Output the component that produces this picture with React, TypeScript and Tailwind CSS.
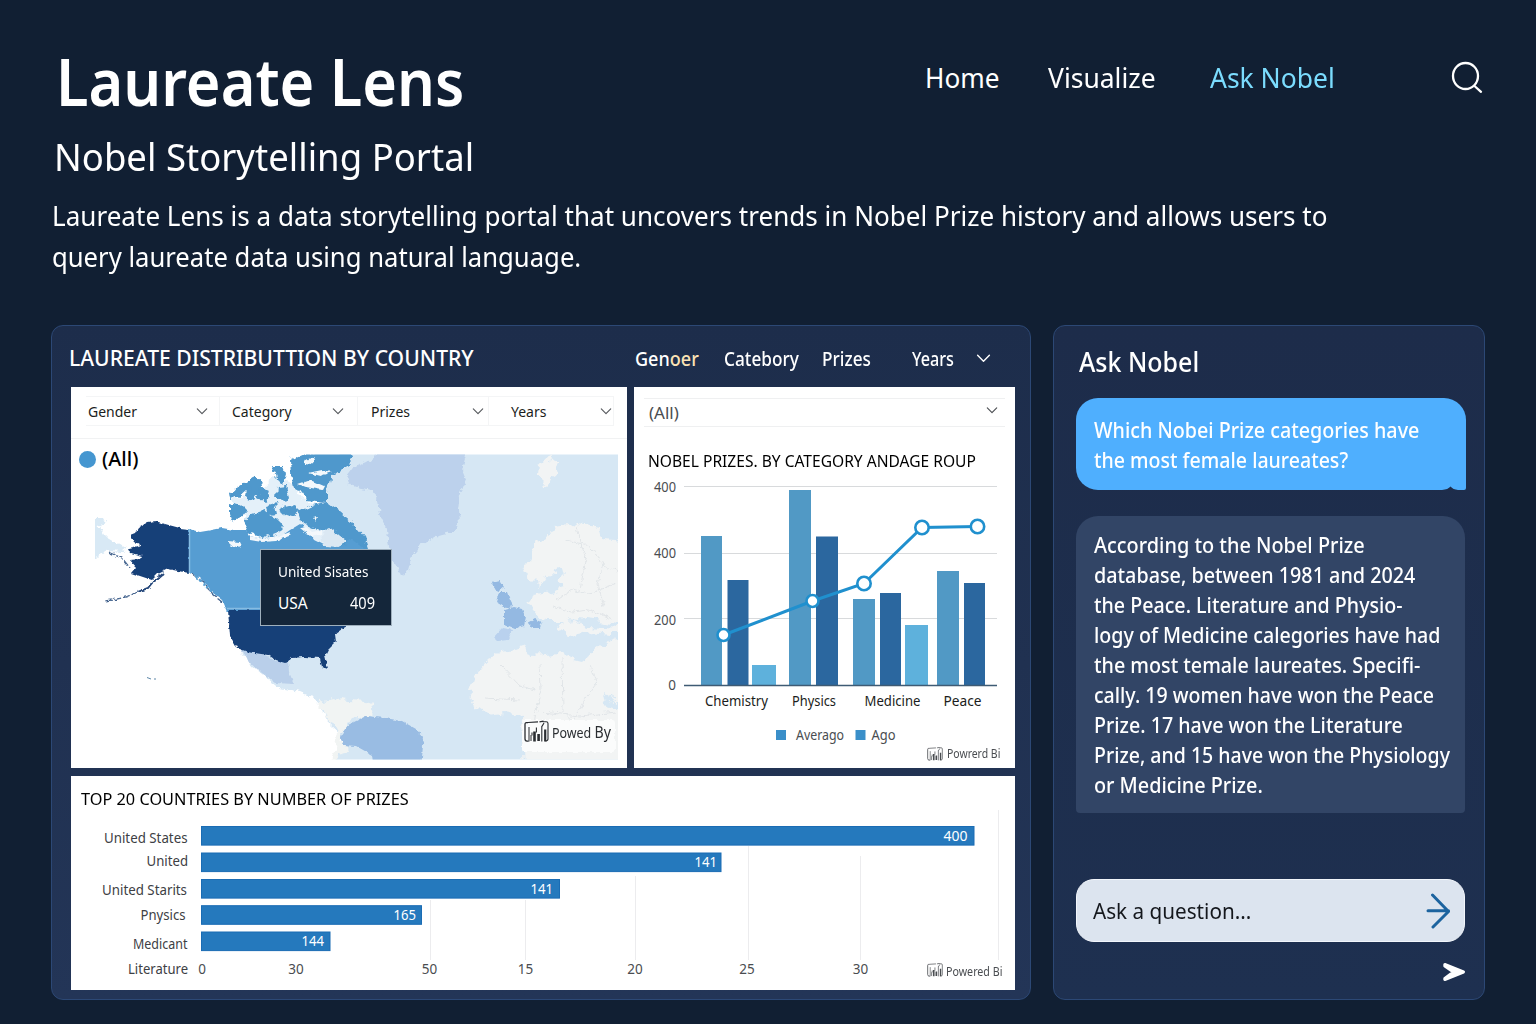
import type { ReactNode } from "react";

/** Text line whose width is tuned with a horizontal scale class. */
function Line({ className = "", children }: { className?: string; children: ReactNode }) {
  return <span className={`block w-max origin-left whitespace-nowrap ${className}`}>{children}</span>;
}

function Chevron({ className = "" }: { className?: string }) {
  return (
    <svg viewBox="0 0 14 8" className={className} fill="none" stroke="currentColor" strokeWidth="1.300" strokeLinecap="round" strokeLinejoin="round">
      <path d="M1.5 1 7 6.6 12.5 1" />
    </svg>
  );
}

function PowerMark({ className = "" }: { className?: string }) {
  return (
    <svg viewBox="0 0 25 22" className={className} fill="none" stroke="currentColor">
      <path d="M4 2.200H2.4Q1 2.200 1 3.8v14.4Q1 20.4 3 20.6h1.6" strokeWidth="1.3" />
      <path d="M4 2 14 1.4M15.5 1.4l4-.8M18.6 1.2h3.6Q24 1.2 24 3v15.6q0 1.8-2.4 2" strokeWidth="1.1" />
      <path d="M5 6.5V21M7 14.500v6" strokeWidth="1" />
      <path d="M10.500 11v10M14.600 13.5v7" strokeWidth="2.600" />
      <path d="M17.8 5.5V21M20 2.5l-2.200 3.6M12.4 7v5M8 12v3" strokeWidth="1.1" />
      <path d="M21.200 9v12" strokeWidth="2.200" />
    </svg>
  );
}

const filters = [
  { label: "Gender", box: "w-[134px] pl-[2px]", chev: "right-[11px]" },
  { label: "Category", box: "w-[138px] pl-[12px]", chev: "right-[13px]" },
  { label: "Prizes", box: "w-[131px] pl-[13px]", chev: "right-[4px]" },
  { label: "Years", box: "w-[125px] pl-[22px]", chev: "right-[1px]" },
];

function WorldMap() {
  return (
    <svg viewBox="71 440 556 328" className="absolute inset-x-0 bottom-0 h-[328px] w-[556px]">
      <defs>
        <filter id="coast" x="-5%" y="-5%" width="110%" height="110%">
          <feTurbulence type="fractalNoise" baseFrequency="0.16" numOctaves="3" seed="4" result="n" />
          <feDisplacementMap in="SourceGraphic" in2="n" scale="7" xChannelSelector="R" yChannelSelector="G" />
          <feGaussianBlur stdDeviation="0.4" />
        </filter>
        <filter id="rough" x="-5%" y="-5%" width="110%" height="110%">
          <feTurbulence type="fractalNoise" baseFrequency="0.22" numOctaves="2" seed="9" result="n" />
          <feDisplacementMap in="SourceGraphic" in2="n" scale="4" xChannelSelector="R" yChannelSelector="G" />
          <feGaussianBlur stdDeviation="0.3" />
        </filter>
        <filter id="isles" x="-5%" y="-5%" width="110%" height="110%">
          <feTurbulence type="fractalNoise" baseFrequency="0.13" numOctaves="3" seed="21" result="n" />
          <feDisplacementMap in="SourceGraphic" in2="n" scale="9" xChannelSelector="R" yChannelSelector="G" />
          <feGaussianBlur stdDeviation="0.4" />
        </filter>
        <filter id="soft" x="-10%" y="-10%" width="120%" height="120%">
          <feTurbulence type="fractalNoise" baseFrequency="0.09" numOctaves="4" seed="12" result="n" />
          <feDisplacementMap in="SourceGraphic" in2="n" scale="14" xChannelSelector="R" yChannelSelector="G" />
          <feGaussianBlur stdDeviation="0.5" />
        </filter>
        <clipPath id="frame">
          <rect x="95" y="454.5" width="523" height="305" />
        </clipPath>
      </defs>
      <g clipPath="url(#frame)">
        <path filter="url(#coast)" fill="#d6e7f4" d="M346 440H640V780H330L336 756 345 745 342 735 330 724 322 708 312 697 300 692 280 688 262 674 250 664 243 655 240 630H340V552L322 505 326 480 336 466Z" />
        <path filter="url(#coast)" fill="#d8e9f5" d="M85 518H104L106 522 99 526 104 535 114 541 126 548 122 551 108 550 98 556 92 562H85Z" />
        <path filter="url(#soft)" fill="#f1f4f3" d="M318 702 340 698 362 700 376 708 368 718 350 720 342 732 346 748 338 760 330 760 340 740 328 716Z" />

        {/* Greenland */}
        <path filter="url(#coast)" fill="#bcd1ec" d="M346 476 352 468 366 462 375 455 370 440H470L462 470 466 480 460 495 458 510 459 525 450 533 435 537 421 545 412 556 408 570 402 578 398 568 392 560 389 548 387 530 380 515 378 500 373 490 360 488 348 484Z" />
        {/* Mexico */}
        <path filter="url(#rough)" fill="#b9cfea" d="M242 650 262 654 276 661 288 660 289 672 294 684 276 683 262 673 250 663Z" />
        {/* South America */}
        <path filter="url(#rough)" fill="#99bce3" d="M340 736 348 725 366 716 385 718 402 721 416 729 424 738 423 745 421 770H374L372 755 356 746 344 745Z" />

        {/* Europe and Africa */}
        <g filter="url(#soft)" fill="#f2f4f4">
          <path d="M540 464 552 458 562 462 556 472 550 484 544 488 539 476Z" />
          <path d="M556 526 574 523 598 528 602 540 620 542 640 540V634H610L592 632 570 636 556 626 562 622 548 622 538 616 530 606 524 602 536 594 552 592 566 588 558 578 548 574 540 588 530 578 522 572 530 558 536 546 548 538Z" />
          <path d="M488 660 502 650 524 646 530 656 560 654 584 660 600 646 622 638 640 640V780H524L522 716 504 712 486 714 474 704 468 692 474 676Z" />
        </g>
        <g filter="url(#soft)" fill="#d6e7f4">
          <path d="M544 578 558 568 566 574 556 584ZM566 618 588 620 620 624V628L590 626ZM604 694 616 702 618 708 606 704Z" />
        </g>
        <g filter="url(#coast)" fill="none" stroke="#e1e5e8" strokeWidth="1">
          <path d="M540 664 541 690 536 710 532 740M562 658 563 712 578 728M590 664 596 684 584 700 572 724M500 665 520 686 536 690M484 698 520 700M552 606 572 612 590 610 612 620M566 540 590 546 604 566 618 572M556 600 572 590 588 594 616 584M576 528 586 560 580 590M604 560 598 584 604 606M542 712 580 716 616 712" />
        </g>

        {/* British Isles and neighbours */}
        <g filter="url(#rough)" fill="#94b9e2">
          <path d="M492 583 500 581 504 587 499 591 494 589Z" />
          <path d="M499 592 507 592 510 600 513 606 506 608 496 602Z" />
          <path d="M504 610 514 607 522 609 526 618 524 626 514 629 504 625Z" />
          <path d="M528 623 535 619 542 622 540 628 532 628Z" />
          <path fill="#b9d1ee" d="M502 628 512 630 508 640 498 641 493 638Z" />
        </g>

        {/* Arctic channels */}
        <path filter="url(#isles)" fill="#e4f0f9" d="M232 500 256 494 276 476 292 484 302 500 322 508 330 520 346 538 340 548 300 540 262 541 248 530 246 516Z" />
        {/* Canadian arctic islands */}
        <g fill="#4f98cc" filter="url(#isles)">
          <path d="M290 460 304 454 350 450 352 458 340 470 330 478 327 490 327 503 306 501 304 494 294 488 291 474Z" />
          <path d="M273 466 281 466 286 474 283 484 277 478Z" />
          <path d="M229 494 242 485 256 475 262 482 264 490 256 496 246 491 238 498 230 500Z" />
          <path d="M230 502 242 505 247 510 242 517 232 521 230 514Z" />
          <path d="M247 488 257 492 255 501 246 497ZM261 486 269 490 266 503 258 498ZM278 487 286 486 289 496 284 502 277 496Z" />
          <path d="M265 507 275 504 277 513 267 514ZM281 508 293 505 299 511 292 517 283 514Z" />
          <path d="M243 522 252 514 264 510 275 517 282 524 279 533 264 539 249 533Z" />
          <path d="M298 512 314 505 328 503 340 512 352 522 364 536 370 554 350 556 342 542 330 532 314 528 301 522Z" />
        </g>
        {/* Canada */}
        <path filter="url(#rough)" fill="#569dd2" d="M189 529 200 532 212 530 222 528 234 530 246 530 250 536 262 539 280 537 290 530 300 524 308 530 314 540 326 546 345 545 350 538 364 549V612H227L222 600 213 593 207 585 200 577 189 573Z" />
        <g filter="url(#rough)" fill="#f3f8fc">
          <path d="M250 536 264 539 280 536 290 532 289 536 276 541 262 542 250 540ZM227 541 240 542 242 546 234 548ZM313 518 318 517 316 522ZM304 460 316 457 312 465 305 464ZM298 484 310 480 324 486 322 490 306 487Z" />
          <path d="M332 472 320 476 308 473 322 470ZM300 528 306 527 312 532 322 530 322 534 310 536Z" />
        </g>
        <path d="M320 534 332 528 346 540 340 548 324 547Z" fill="#dbe8f3" filter="url(#isles)" />

        {/* Alaska and the contiguous states */}
        <g filter="url(#rough)">
          <path fill="#173f78" d="M189 529 180 528 165 524 155 521 148 522 138 528 135 533 130 535 134 541 142 546 129 549 131 553 142 556 140 559 130 560 136 567 131 573 140 576 152 580 158 574 168 569 178 571 189 573Z" />
          <path fill="none" stroke="#28497c" strokeWidth="2" d="M164 573 152 583 148 588 138 592" />
          <path fill="none" stroke="#46658f" strokeWidth="1.3" strokeDasharray="7 2" d="M138 592 126 597 112 600 104 601M108 552 122 558 130 568M192 574 204 582 212 594 222 602" />
          <path fill="none" stroke="#58a0d3" strokeWidth="3" strokeDasharray="3 2" d="M196 576 206 586 214 594" />
        </g>
        <path filter="url(#rough)" fill="#173f78" d="M228 610H353L354 622 342 629 335 634 336 642 328 650 325 656 328 669 322 667 320 658 304 657 292 658 286 663 276 660 268 655 248 652 237 648 230 636Z" />
        <path d="M189.500 529V573M227 608.500H262" stroke="#86bce2" strokeWidth="1.500" fill="none" />
        <path d="M147 677.500 151 679M154 679H156" stroke="#5d87a8" fill="none" />
      </g>
      {/* Badge backdrop */}
      <rect x="522" y="720" width="93" height="32" rx="3" fill="#fbfcfc" filter="url(#rough)" />
    </svg>
  );
}

const columns = [
  { x: 701, y: 536, w: 21, c: "#5199c5" },
  { x: 727.5, y: 580, w: 21, c: "#2b679f" },
  { x: 752, y: 665, w: 24, c: "#5eb1dc" },
  { x: 789, y: 490, w: 22, c: "#5199c5" },
  { x: 816, y: 536.5, w: 22, c: "#2b679f" },
  { x: 853, y: 599, w: 22, c: "#5199c5" },
  { x: 880, y: 593, w: 21, c: "#2b679f" },
  { x: 905, y: 625, w: 23, c: "#5eb1dc" },
  { x: 937, y: 571, w: 22, c: "#5199c5" },
  { x: 964, y: 583, w: 21, c: "#2b679f" },
];
const points: [number, number, number][] = [
  [723.5, 635, 6],
  [812.5, 601, 6],
  [864, 583.5, 6.7],
  [922, 527.5, 6.7],
  [977.5, 526.5, 6.7],
];

function CategoryChart() {
  return (
    <svg viewBox="634 475 381 271" className="block h-[271px] w-[381px]" fontSize="14">
      <path d="M684 486.500H997M684 553.500H997M684 618.500H997" stroke="#d8dadc" fill="none" />
      {columns.map((b) => (
        <rect key={b.x} x={b.x} y={b.y} width={b.w} height={685.5 - b.y} fill={b.c} />
      ))}
      <path d="M684 685.500H997" stroke="#3f5b74" strokeWidth="1.500" fill="none" />
      <polyline points={points.map(([x, y]) => `${x},${y}`).join(" ")} fill="none" stroke="#2090ce" strokeWidth="3" />
      {points.map(([x, y, r]) => (
        <circle key={x} cx={x} cy={y} r={r} fill="#fff" stroke="#2090ce" strokeWidth="2.600" />
      ))}
      <g fill="#4a4d51" textAnchor="end" fontSize="13.500">
        <text x="676" y="492" textLength="22" lengthAdjust="spacingAndGlyphs">400</text>
        <text x="676" y="557.500" textLength="22" lengthAdjust="spacingAndGlyphs">400</text>
        <text x="676" y="624.500" textLength="22" lengthAdjust="spacingAndGlyphs">200</text>
        <text x="676" y="690">0</text>
      </g>
      <g fill="#1b1d20">
        <text x="705" y="706" textLength="63" lengthAdjust="spacingAndGlyphs">Chemistry</text>
        <text x="792" y="706" textLength="44" lengthAdjust="spacingAndGlyphs">Physics</text>
        <text x="864.500" y="706" textLength="56" lengthAdjust="spacingAndGlyphs">Medicine</text>
        <text x="943.500" y="706" textLength="38" lengthAdjust="spacingAndGlyphs">Peace</text>
      </g>
      <rect x="776" y="730" width="10" height="10" fill="#3a8fc9" />
      <rect x="855.500" y="730" width="10" height="10" fill="#3a8fc9" />
      <g fill="#4a4d51">
        <text x="796" y="740" textLength="48" lengthAdjust="spacingAndGlyphs">Averago</text>
        <text x="871.500" y="740" textLength="24" lengthAdjust="spacingAndGlyphs">Ago</text>
      </g>
    </svg>
  );
}

const bars = [
  { y: 826, end: 974.5, value: "400", vx: 967.500 },
  { y: 852.5, end: 721.5, value: "141", vx: 717 },
  { y: 879, end: 560, value: "141", vx: 553 },
  { y: 905.2, end: 422, value: "165", vx: 416 },
  { y: 931.5, end: 330.5, value: "144", vx: 324 },
];
const rowLabels: [string, number, number, number][] = [
  ["United States", 187.5, 843, 83.5],
  ["United", 188, 866, 41.5],
  ["United Starits", 187, 895, 85],
  ["Pnysics", 185.5, 920, 45],
  ["Medicant", 187.5, 949, 54.5],
  ["Literature", 188, 974, 60],
];
const ticks: [string, number][] = [
  ["0", 202],
  ["30", 296],
  ["50", 429.5],
  ["15", 525.5],
  ["20", 635],
  ["25", 747],
  ["30", 860.5],
];

function CountryChart() {
  return (
    <svg viewBox="71 776 944 214" className="absolute inset-0 h-[214px] w-[944px]" fontSize="14">
      <path d="M430.500 900V960M525.500 900V960M635.500 876V960M748.500 846V960M860.500 856V960M998.500 810V960" stroke="#ececee" fill="none" />
      {bars.map((b) => (
        <g key={b.y}>
          <rect x="201.500" y={b.y + 0.5} width={b.end - 202} height="18.600" fill="#2579bd" stroke="#1a6cb4" strokeWidth="1" />
          <text x={b.vx} y={b.y + 14.8} fill="#fff" textAnchor="end" textLength={b.value === "400" ? 24 : 22.5} lengthAdjust="spacingAndGlyphs">
            {b.value}
          </text>
        </g>
      ))}
      <g fill="#3d4044" textAnchor="end">
        {rowLabels.map(([t, x, y, w]) => (
          <text key={t} x={x} y={y} textLength={w} lengthAdjust="spacingAndGlyphs">{t}</text>
        ))}
      </g>
      <g fill="#4a4d51" textAnchor="middle" fontSize="13.500">
        {ticks.map(([t, x]) => (
          <text key={x} x={x} y="974">{t}</text>
        ))}
      </g>
    </svg>
  );
}

const answer: [string, string][] = [
  ["According to the Nobel Prize", "scale-x-[0.904]"],
  ["database, between 1981 and 2024", "scale-x-[0.898]"],
  ["the Peace. Literature and Physio-", "scale-x-[0.893]"],
  ["logy of Medicine calegories have had", "scale-x-[0.892]"],
  ["the most temale laureates. Specifi-", "scale-x-[0.896]"],
  ["cally. 19 women have won the Peace", "scale-x-[0.889]"],
  ["Prize. 17 have won the Literature", "scale-x-[0.893]"],
  ["Prize, and 15 have won the Physiology", "scale-x-[0.887]"],
  ["or Medicine Prize.", "scale-x-[0.9]"],
];

export default function App() {
  return (
    <div className="flex h-[1024px] w-[1536px] flex-col overflow-hidden bg-[#111f33] font-['Noto_Sans',sans-serif] text-white">
      <header className="flex h-[325px] shrink-0 flex-col pt-[45px] pl-[50px]">
        <div className="flex h-[87px]">
          <h1 className="w-[876px] pl-[6px] text-[65px] leading-[72px] font-semibold">
            <Line className="scale-x-[0.915]">Laureate Lens</Line>
          </h1>
          <nav className="flex pt-[15px] text-[27px] leading-9">
            <a className="w-[122px]"><Line className="translate-x-[-1px] scale-x-[0.97]">Home</Line></a>
            <a className="w-[162px]"><Line className="scale-x-[0.98]">Visualize</Line></a>
            <a className="w-[240px] text-[#7bdcfe]"><Line className="scale-x-[0.98]">Ask Nobel</Line></a>
            <svg viewBox="0 0 34 34" className="size-[34px]" fill="none" stroke="currentColor" strokeWidth="2.300" strokeLinecap="round">
              <ellipse cx="15.500" cy="16" rx="12.500" ry="13" />
              <path d="M24.500 26 31 31.800" />
            </svg>
          </nav>
        </div>
        <h2 className="pl-[4px] text-[39px] leading-[48px]">
          <Line className="scale-x-[0.937]">Nobel Storytelling Portal</Line>
        </h2>
        <p className="mt-[15px] pl-[2px] text-[28px] leading-[40.500px]">
          <Line className="scale-x-[0.931]">Laureate Lens is a data storytelling portal that uncovers trends in Nobel Prize history and allows users to</Line>
          <Line className="scale-x-[0.916]">query laureate data using natural language.</Line>
        </p>
      </header>

      <main className="flex h-[675px] gap-[22px] pl-[51px]">
        <section className="flex w-[980px] flex-col rounded-xl border border-[#2c4875] bg-[linear-gradient(180deg,#1d2d4b,#233557)] pl-[19px]">
          <div className="flex h-[61px] pt-[16px]">
            <h3 className="w-[565px] text-[22px] leading-[30px] font-medium">
              <Line className="translate-x-[-2px] scale-x-[0.96]">LAUREATE DISTRIBUTTION BY COUNTRY</Line>
            </h3>
            <div className="flex pt-[1px] text-[20.500px] leading-[30px] font-medium">
              <span className="w-[88px]"><Line className="translate-x-[-1px] scale-x-[0.88]">Gen<span className="text-[#fbe3b4]">oer</span></Line></span>
              <span className="w-[98px]"><Line className="scale-x-[0.84]">Catebory</Line></span>
              <span className="w-[90px]"><Line className="scale-x-[0.84]">Prizes</Line></span>
              <span className="w-[64px]"><Line className="scale-x-[0.79]">Years</Line></span>
              <Chevron className="mt-[11px] h-[9px] w-[15px]" />
            </div>
          </div>

          <div className="flex gap-[7px] text-black">
            <div className="relative h-[381px] w-[556px] bg-white">
              <WorldMap />
              <div className="relative flex h-[52px] border-b border-[#f1f2f3] pt-[9px] pl-[15px] text-[14px] leading-[29px] text-[#1b1d20]">
                {filters.map((f) => (
                  <div key={f.label} className={`relative h-[30px] border-y border-r border-[#f4f5f6] ${f.box}`}>
                    {f.label}
                    <Chevron className={`absolute top-[11px] h-[7px] w-[12px] text-[#55585c] ${f.chev}`} />
                  </div>
                ))}
              </div>
              <div className="relative flex items-center gap-[6px] pt-[6px] pl-[8px]">
                <i className="size-[17px] rounded-full bg-[#4596d0]" />
                <span className="text-[20px] leading-[28px] font-medium">(All)</span>
              </div>
              <div className="absolute top-[162px] left-[189px] flex h-[77px] w-[132px] flex-col border border-[#9fb0bd] bg-[#14263a] pt-[10px] pl-[17px] leading-[24px] text-white">
                <span className="text-[14px]"><Line className="scale-x-[0.97]">United Sisates</Line></span>
                <span className="mt-[7px] flex text-[15.500px]">
                  <b className="w-[72px] font-normal">USA</b>
                  <Line className="scale-x-[0.94]">409</Line>
                </span>
              </div>
              <div className="absolute top-[333px] left-[453px] flex text-[#2a2d31]">
                <PowerMark className="h-[23px] w-[25px]" />
                <span className="ml-[3px] text-[15px] leading-[23px]">
                  <Line className="scale-x-[0.83]">Powed <span className="text-[17px]">By</span></Line>
                </span>
              </div>
            </div>

            <div className="relative h-[381px] w-[381px] bg-white">
              <div className="mx-[10px] mt-[11px] flex h-[29px] items-center justify-between border-y border-[#eff0f1] pr-[7px] pl-[5px] text-[#4a4d51]">
                <span className="text-[17px] leading-[28px]">(All)</span>
                <Chevron className="mb-1 h-[7px] w-[12px]" />
              </div>
              <h4 className="mt-[22px] h-[26px] pl-[14px] text-[16px] leading-[24px]">
                <Line className="scale-x-[0.973]">NOBEL PRIZES. BY CATEGORY ANDAGE ROUP</Line>
              </h4>
              <CategoryChart />
              <div className="absolute top-[360px] left-[293px] flex text-[#4a4d51]">
                <PowerMark className="h-[14px] w-[16px]" />
                <span className="ml-1 text-[12px] leading-[14px]"><Line className="scale-x-[0.87]">Powrerd Bi</Line></span>
              </div>
            </div>
          </div>

          <div className="relative mt-2 h-[214px] w-[944px] bg-white pt-[12px] pl-[10px] text-black">
            <CountryChart />
            <h4 className="text-[16px] leading-[23px]">
              <Line className="scale-x-[1.018]">TOP 20 COUNTRIES BY NUMBER OF PRIZES</Line>
            </h4>
            <div className="absolute top-[187px] left-[856px] flex text-[#4a4d51]">
              <PowerMark className="h-[14px] w-[16px]" />
              <span className="ml-[3px] text-[12px] leading-[18px]"><Line className="scale-x-[0.89]">Powered Bi</Line></span>
            </div>
          </div>
        </section>

        <section className="flex w-[432px] flex-col rounded-xl border border-[#2c4875] bg-[linear-gradient(180deg,#1d2c4a,#1e3050)] pl-[22px]">
          <h3 className="h-[72px] pt-[16px] pl-[3px] text-[27px] leading-[40px] font-medium">
            <Line className="scale-x-[0.925]">Ask Nobel</Line>
          </h3>
          <div className="relative h-[92px] w-[390px] rounded-[22px] rounded-br-[2px] bg-[#4faffe] pt-[16px] pl-[18px] text-[22px] leading-[30px] font-medium">
            <Line className="scale-x-[0.896]">Which Nobei Prize categories have</Line>
            <Line className="scale-x-[0.889]">the most female laureates?</Line>
            <svg viewBox="0 0 24 4" className="absolute right-0 bottom-0 h-1 w-6">
              <path d="M0 4Q6 3.500 8.500 .5 11 3.500 16 4Z" fill="#1d2c4a" />
            </svg>
          </div>
          <div className="mt-[26px] h-[297px] w-[389px] rounded-t-[22px] rounded-b-[4px] bg-[#324566] pt-[13px] pl-[18px] text-[22px] leading-[30px] font-medium">
            {answer.map(([t, c]) => (
              <Line key={t} className={c}>{t}</Line>
            ))}
          </div>
          <div className="mt-[66px] flex h-[63px] w-[389px] items-center justify-between rounded-[18px] border border-[#f2f6fb] bg-[#dce4ef] pr-[14px] pl-[16px] text-[22px] text-[#15181d]">
            <Line className="scale-x-[0.94]">Ask a question...</Line>
            <svg viewBox="0 0 24 36" className="h-9 w-6" fill="none" stroke="#1c639f" strokeWidth="3" strokeLinecap="round" strokeLinejoin="round">
              <path d="M2 17.800H22.500M6.500 2 22.500 18.500 7 34" />
            </svg>
          </div>
          <svg viewBox="0 0 24 20" className="mt-[20px] ml-[366px] h-5 w-6" fill="white" stroke="white" strokeWidth="3" strokeLinecap="round" strokeLinejoin="round">
            <path d="M2.800 2.500 21.500 10 2.800 17.500V16.500L11.500 10 2.800 4Z" />
          </svg>
        </section>
      </main>
    </div>
  );
}
